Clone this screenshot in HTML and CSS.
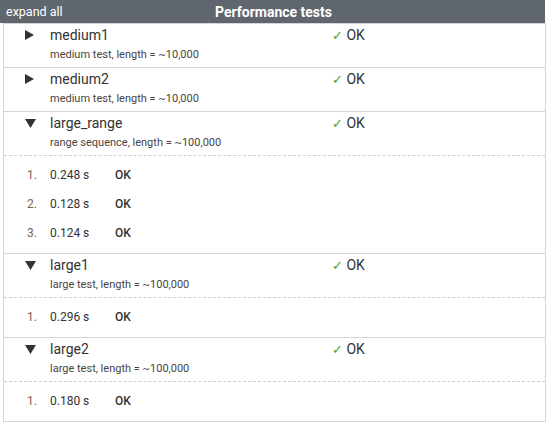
FILE: index.html
```html
<!DOCTYPE html>
<html>
<head>
<meta charset="utf-8">
<link rel="stylesheet" href="styles.css">
</head>
<body>
<div class="header">
  <span class="expand">expand all</span>
  <span class="title">Performance tests</span>
  <span></span>
</div>
<div class="box">
  <div class="test">
    <div class="head">
      <span class="tri"><svg width="9" height="10" viewBox="0 0 9 10"><polygon points="0,0 9,5 0,10" fill="#333"/></svg></span>
      <div class="info">
        <div class="name">medium1</div>
        <div class="desc">medium test, length = ~10,000</div>
      </div>
      <div class="status"><span class="check">✓</span> OK</div>
    </div>
  </div>
  <div class="test">
    <div class="head">
      <span class="tri"><svg width="9" height="10" viewBox="0 0 9 10"><polygon points="0,0 9,5 0,10" fill="#333"/></svg></span>
      <div class="info">
        <div class="name">medium2</div>
        <div class="desc">medium test, length = ~10,000</div>
      </div>
      <div class="status"><span class="check">✓</span> OK</div>
    </div>
  </div>
  <div class="test open">
    <div class="head">
      <span class="tri"><svg width="11" height="9" viewBox="0 0 11 9"><polygon points="0,0 11,0 5.5,9" fill="#333"/></svg></span>
      <div class="info">
        <div class="name">large_range</div>
        <div class="desc">range sequence, length = ~100,000</div>
      </div>
      <div class="status"><span class="check">✓</span> OK</div>
    </div>
    <ol class="runs">
      <li><span class="num">1.</span><span class="time">0.248 s</span><span class="ok">OK</span></li>
      <li><span class="num">2.</span><span class="time">0.128 s</span><span class="ok">OK</span></li>
      <li><span class="num">3.</span><span class="time">0.124 s</span><span class="ok">OK</span></li>
    </ol>
  </div>
  <div class="test open">
    <div class="head">
      <span class="tri"><svg width="11" height="9" viewBox="0 0 11 9"><polygon points="0,0 11,0 5.5,9" fill="#333"/></svg></span>
      <div class="info">
        <div class="name">large1</div>
        <div class="desc">large test, length = ~100,000</div>
      </div>
      <div class="status"><span class="check">✓</span> OK</div>
    </div>
    <ol class="runs">
      <li><span class="num">1.</span><span class="time">0.296 s</span><span class="ok">OK</span></li>
    </ol>
  </div>
  <div class="test open last">
    <div class="head">
      <span class="tri"><svg width="11" height="9" viewBox="0 0 11 9"><polygon points="0,0 11,0 5.5,9" fill="#333"/></svg></span>
      <div class="info">
        <div class="name">large2</div>
        <div class="desc">large test, length = ~100,000</div>
      </div>
      <div class="status"><span class="check">✓</span> OK</div>
    </div>
    <ol class="runs">
      <li><span class="num">1.</span><span class="time">0.180 s</span><span class="ok">OK</span></li>
    </ol>
  </div>
</div>
</body>
</html>
```

FILE: styles.css
```css
html, body {
  margin: 0;
  padding: 0;
  background: #fff;
}
body {
  font-family: Roboto, "Liberation Sans", sans-serif;
  color: #333;
}
.header {
  width: 545px;
  height: 23px;
  background: #5f666e;
  color: #fff;
  display: grid;
  grid-template-columns: 1fr auto 1fr;
  align-items: center;
}
.expand {
  font-size: 12.5px;
  padding-left: 6px;
}
.title {
  font-size: 14px;
  font-weight: 700;
  padding-left: 2px;
}
.box {
  margin-left: 3px;
  width: 541px;
  border: 1px solid #d6d6d6;
}
.test {
  border-bottom: 1px solid #d6d6d6;
}
.test.last {
  border-bottom: none;
}
.head {
  display: grid;
  grid-template-columns: 46px 282px 1fr;
  padding: 2px 0 2px;
  height: 39px;
}
.test.open .head {
  border-bottom: 1px dashed #cfcfcf;
}
.tri {
  padding-left: 21px;
  height: 18px;
  display: flex;
  align-items: center;
}
.tri svg {
  display: block;
}
.name {
  font-size: 14px;
  line-height: 18px;
  color: #333;
}
.desc {
  font-size: 11px;
  line-height: 21px;
  color: #4a4440;
}
.status {
  font-size: 14px;
  line-height: 18px;
  font-weight: 400;
  color: #333;
  padding-left: 0;
}
.check {
  font-family: "DejaVu Sans", sans-serif;
  color: #3aa53a;
  font-size: 13px;
  font-weight: 400;
}
.runs {
  list-style: none;
  margin: 0;
  padding: 5px 0;
}
.runs li {
  display: grid;
  grid-template-columns: 46px 65px auto;
  height: 29px;
  line-height: 29px;
  font-size: 12px;
}
.num {
  padding-left: 23px;
  color: #7a6455;
}
.time {
  color: #333;
}
.ok {
  font-weight: 500;
  color: #333;
}
```
